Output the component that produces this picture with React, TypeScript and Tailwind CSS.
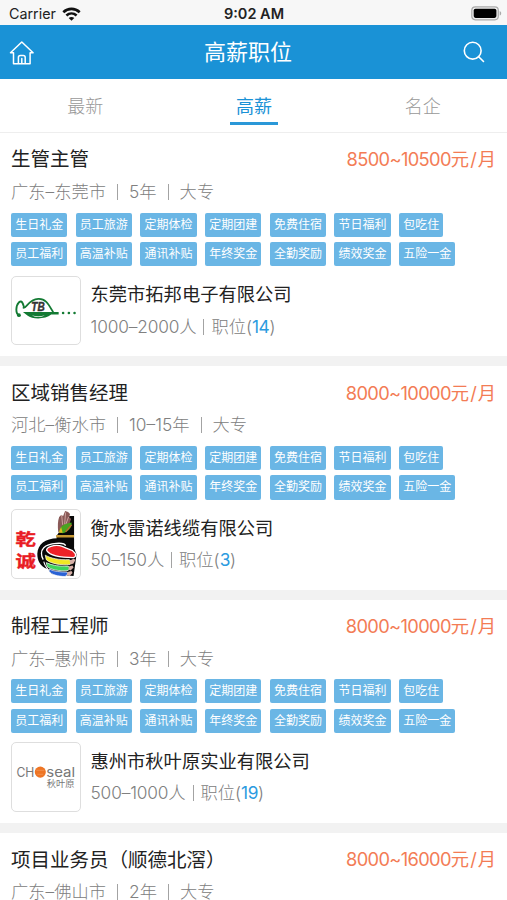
import type { ReactNode } from "react";

const tagRows = [
  ["生日礼金", "员工旅游", "定期体检", "定期团建", "免费住宿", "节日福利", "包吃住"],
  ["员工福利", "高温补贴", "通讯补贴", "年终奖金", "全勤奖励", "绩效奖金", "五险一金"],
];

const tabs = ["最新", "高薪", "名企"];

function TopbandLogo() {
  return (
    <svg viewBox="0 0 68 68" className="w-full h-full">
      <g fill="none" stroke="#137a33" strokeLinecap="round">
        <path d="M7 38.500C3.500 37 3.500 29 7 25.500c3-2.500 4 1 5 4.500" strokeWidth="1.900" />
        <path d="M11.500 31c3 1 5-8.500 15-9 8-.5 11 7 15 13.500" strokeWidth="1.700" />
      </g>
      <path d="M11 35.200h36v2.600h-7.500c-6 5-19 5-24 1z" fill="#137a33" />
      <path d="M20 38.500c4 1.500 9 1.500 13 0-3 2.500-10 2.500-13 0z" fill="#d9eadc" />
      <text x="19.500" y="34.500" fontSize="12" fontWeight="900" fontStyle="italic" fill="#333" stroke="#333" strokeWidth=".4" textLength="13.500" lengthAdjust="spacingAndGlyphs" fontFamily="Liberation Sans, sans-serif">TB</text>
      <circle cx="7" cy="38.500" r="1.900" fill="#137a33" />
      <circle cx="51.500" cy="36.300" r="1.300" fill="#137a33" />
      <circle cx="57.300" cy="36.300" r="1.300" fill="#137a33" />
      <circle cx="63" cy="36.300" r="1.300" fill="#137a33" />
    </svg>
  );
}

function QianchengLogo() {
  return (
    <svg viewBox="0 0 68 68" className="w-full h-full">
      {/* sleeve and upper hand */}
      <path d="M45 26L58 6h4.500v32H45z" fill="#080808" />
      <path d="M44.500 25.300h18v2.400h-18z" fill="#c99a35" />
      <path d="M46.500 22c-.5-6-.5-11 1-15l2-2 2 1 2-5 3 1 2 2-1 3 2 2-3 9-7 5z" fill="#8a5a58" />
      <path d="M50 5l1 10M54 2.500l-1 12M57 7l-3 8" stroke="#d3aaa5" strokeWidth=".9" />
      <path d="M48 22.500c-1-6 5-9 12-10 1 5-4 10-9 11z" fill="#49a51f" />
      <path d="M47 23l2.500-6 1.500 6z" fill="#e0bc22" />
      <path d="M54 22l6-7" stroke="#c8632f" strokeWidth="1.300" />
      {/* fist */}
      <path d="M46 28.500h16.500v10l2.500 6-1 8-2 14-22-2-4-5c-8-3-10.500-9-10.500-15.500C26 35 33 28.500 46 28.500z" fill="#080808" />
      <path d="M54 36c-1-4-17-3-22 2-3 3-3 8-.5 12" fill="none" stroke="#fff" strokeWidth="1.300" />
      <path d="M32 52c1 5 4 7 5 9" fill="none" stroke="#fff" strokeWidth="1.100" />
      <path d="M35 41c-1-4 8-6 13-5 4 1 7 3 13 5 4 3 4 6 1 7-8 0-23-1-27-7z" fill="#ed2228" stroke="#fff" strokeWidth="1.300" />
      <path d="M33.500 45.500c5 3 14 5 24 4.500l3 2-2 3c-9 1-20-1-24-5z" fill="#f1e724" stroke="#fff" strokeWidth=".7" />
      <path d="M34.500 53c6 3 14 4 22 3.500l2 2-2 2.500c-8 1-18-1-21-4z" fill="#3ed35b" stroke="#fff" strokeWidth=".7" />
      <path d="M37.500 59.500c5 2.500 11 3 18 3l1 2-3 2.500c-7 0-14-2-16-5z" fill="#2a62d5" stroke="#fff" strokeWidth=".7" />
      <path d="M58 51l4-2 2 1-2 4-3 1zM57 57l4-1 1 2-3 3-2-1zM56 62.500l4-1 1 2-3 3-3-1z" fill="#d7b0a8" />
      <g fill="#e91c24" stroke="#e91c24" strokeWidth=".4" fontFamily="Noto Sans CJK SC, sans-serif" fontWeight="700" fontSize="15.800">
        <text x="3.500" y="34.800" textLength="20.500" lengthAdjust="spacingAndGlyphs">乾</text>
        <text x="3.500" y="57.800" textLength="20.500" lengthAdjust="spacingAndGlyphs">诚</text>
      </g>
    </svg>
  );
}

function ChosealLogo() {
  return (
    <svg viewBox="0 0 68 68" className="w-full h-full">
      <g fill="#777" fontFamily="Inter, sans-serif">
        <text x="4.500" y="33.800" fontSize="13" textLength="18" lengthAdjust="spacingAndGlyphs">CH</text>
        <circle cx="28.500" cy="29.300" r="5.600" fill="#ee7524" />
        <path d="M24.500 27.500h8M25.500 31.500h6" stroke="#f49a5c" strokeWidth=".7" />
        <text x="34.500" y="33.800" fontSize="13" textLength="29" lengthAdjust="spacingAndGlyphs">seal</text>
        <text x="35" y="44.800" fontSize="9" textLength="28" lengthAdjust="spacingAndGlyphs" fontFamily="Noto Sans CJK SC, sans-serif">秋叶原</text>
      </g>
    </svg>
  );
}

interface Job {
  title: string;
  salary: string;
  city: string;
  years: string;
  company?: string;
  size?: string;
  count?: number;
  logo?: ReactNode;
}

const jobs: Job[] = [
  { title: "生管主管", salary: "8500~10500", city: "广东–东莞市", years: "5年", company: "东莞市拓邦电子有限公司", size: "1000–2000人", count: 14, logo: <TopbandLogo /> },
  { title: "区域销售经理", salary: "8000~10000", city: "河北–衡水市", years: "10–15年", company: "衡水雷诺线缆有限公司", size: "50–150人", count: 3, logo: <QianchengLogo /> },
  { title: "制程工程师", salary: "8000~10000", city: "广东–惠州市", years: "3年", company: "惠州市秋叶原实业有限公司", size: "500–1000人", count: 19, logo: <ChosealLogo /> },
  { title: "项目业务员（顺德北滘）", salary: "8000~16000", city: "广东–佛山市", years: "2年" },
];

function Divider() {
  return <span className="w-px h-4 bg-[#a3a3a3]" />;
}

function JobCard({ job }: { job: Job }) {
  return (
    <article className="h-[223.4px] shrink-0 bg-white px-[11px] pt-[13px]">
      <div className="flex items-center justify-between h-7">
        <h2 className="text-[19.5px] text-[#222]">{job.title}</h2>
        <span className="text-[18.3px] text-[#f37c55]">
          <span className="tracking-[-0.65px]">{job.salary}</span>元<span className="px-[1px]">/</span>月
        </span>
      </div>
      <div className="mt-[6px] flex items-center gap-[11px] h-6 text-[17.3px] font-light text-[#808080]">
        <span>{job.city}</span>
        <Divider />
        <span>{job.years}</span>
        <Divider />
        <span>大专</span>
      </div>
      {job.company && (
        <>
          <div className="mt-[8.500px] flex flex-col gap-[5.3px]">
            {tagRows.map((row, i) => (
              <div key={i} className="flex gap-[8.4px]">
                {row.map((tag) => (
                  <span key={tag} className="h-[24.2px] px-[4.15px] flex items-center rounded-[2px] bg-[#6ab6e5] text-white text-[12px] leading-none">
                    {tag}
                  </span>
                ))}
              </div>
            ))}
          </div>
          <div className="mt-[9.500px] flex gap-[10px]">
            <div className="size-[69.5px] shrink-0 rounded-[5px] border border-[#dedede] overflow-hidden">{job.logo}</div>
            <div className="pt-[5.500px]">
              <div className="h-7 flex items-center text-[18.3px] text-[#222]">{job.company}</div>
              <div className="mt-[3.500px] h-7 flex items-center gap-[7px] text-[17.3px] font-light text-[#808080]">
                <span className="tracking-[-0.15px]">{job.size}</span>
                <Divider />
                <span>
                  职位(<span className="text-[#2b9be0] font-normal tracking-[-0.4px]">{job.count}</span>)
                </span>
              </div>
            </div>
          </div>
        </>
      )}
    </article>
  );
}

export default function App() {
  return (
    <div className="w-full h-[900px] overflow-hidden flex flex-col bg-[#f2f2f2] font-['Inter','Noto_Sans_CJK_SC',sans-serif] whitespace-nowrap">
      {/* Status bar */}
      <div className="h-[25px] shrink-0 grid grid-cols-3 items-center pl-[9px] pr-[5px] pt-[2px] bg-[#f7f7f7] text-[#222]">
        <div className="flex items-center gap-[6px] text-[14.3px]">
          <span>Carrier</span>
          <svg width="19" height="14" viewBox="0 0 19 14" fill="none" stroke="#111" strokeWidth="2.600">
            <path d="M1.300 5.200C6 .7 13 .7 17.700 5.200" />
            <path d="M4.400 8.500c3-2.700 7.200-2.700 10.200 0" />
            <path d="M9.500 13.700L6.700 11c1.500-1.500 4.100-1.500 5.600 0z" fill="#111" stroke="none" />
          </svg>
        </div>
        <div className="-ml-[3px] text-center text-[14.5px] font-semibold">9:02 AM</div>
        <svg className="justify-self-end" width="31" height="15" viewBox="0 0 31 15">
          <rect x=".8" y=".8" width="26.500" height="13" rx="3.500" fill="#eee" stroke="#aaa" strokeWidth="1.200" />
          <rect x="2.700" y="2.700" width="22.700" height="9.200" rx="1.800" fill="#000" />
          <path d="M28.700 5v4.600c2-.8 2-3.800 0-4.600" fill="#aaa" />
        </svg>
      </div>

      {/* Navigation bar */}
      <header className="h-[54px] shrink-0 flex items-center justify-between pl-[9px] pr-[22px] bg-[#1a92d6] text-white">
        <svg className="mt-[2px]" width="26" height="26" viewBox="0 0 26 26" fill="none" stroke="currentColor" strokeWidth="1.500" strokeLinejoin="round" strokeLinecap="round">
          <path d="M4.500 12.800H1.500L12.800 2l11.300 10.800h-3v11h-4.900v-6.300q0-2-2-2h-2.800q-2 0-2 2v6.300H4.500zM12.800 18.500v5M9.400 23.800h6.800" />
        </svg>
        <h1 className="-ml-[2px] text-[22px]">高薪职位</h1>
        <svg width="22" height="22" viewBox="0 0 22 22" fill="none" stroke="currentColor" strokeWidth="1.600" strokeLinecap="round">
          <circle cx="9.700" cy="9.700" r="8.400" />
          <path d="M15.700 15.700L20.500 20.500" />
        </svg>
      </header>

      {/* Tabs */}
      <nav className="h-[54px] shrink-0 grid grid-cols-3 pl-px bg-white border-b border-[#eee]">
        {tabs.map((tab) => (
          <div key={tab} className={tab === "高薪" ? "flex flex-col items-center text-[#1a92d6]" : "flex flex-col items-center text-[#999] font-light"}>
            <span className="pt-[14px] text-[18px] leading-7">{tab}</span>
            {tab === "高薪" && <span className="mt-[1px] h-[3px] w-12 bg-[#2a98d8]" />}
          </div>
        ))}
      </nav>

      <main className="flex flex-col gap-[10px]">
        {jobs.map((job) => (
          <JobCard key={job.title} job={job} />
        ))}
      </main>
    </div>
  );
}
